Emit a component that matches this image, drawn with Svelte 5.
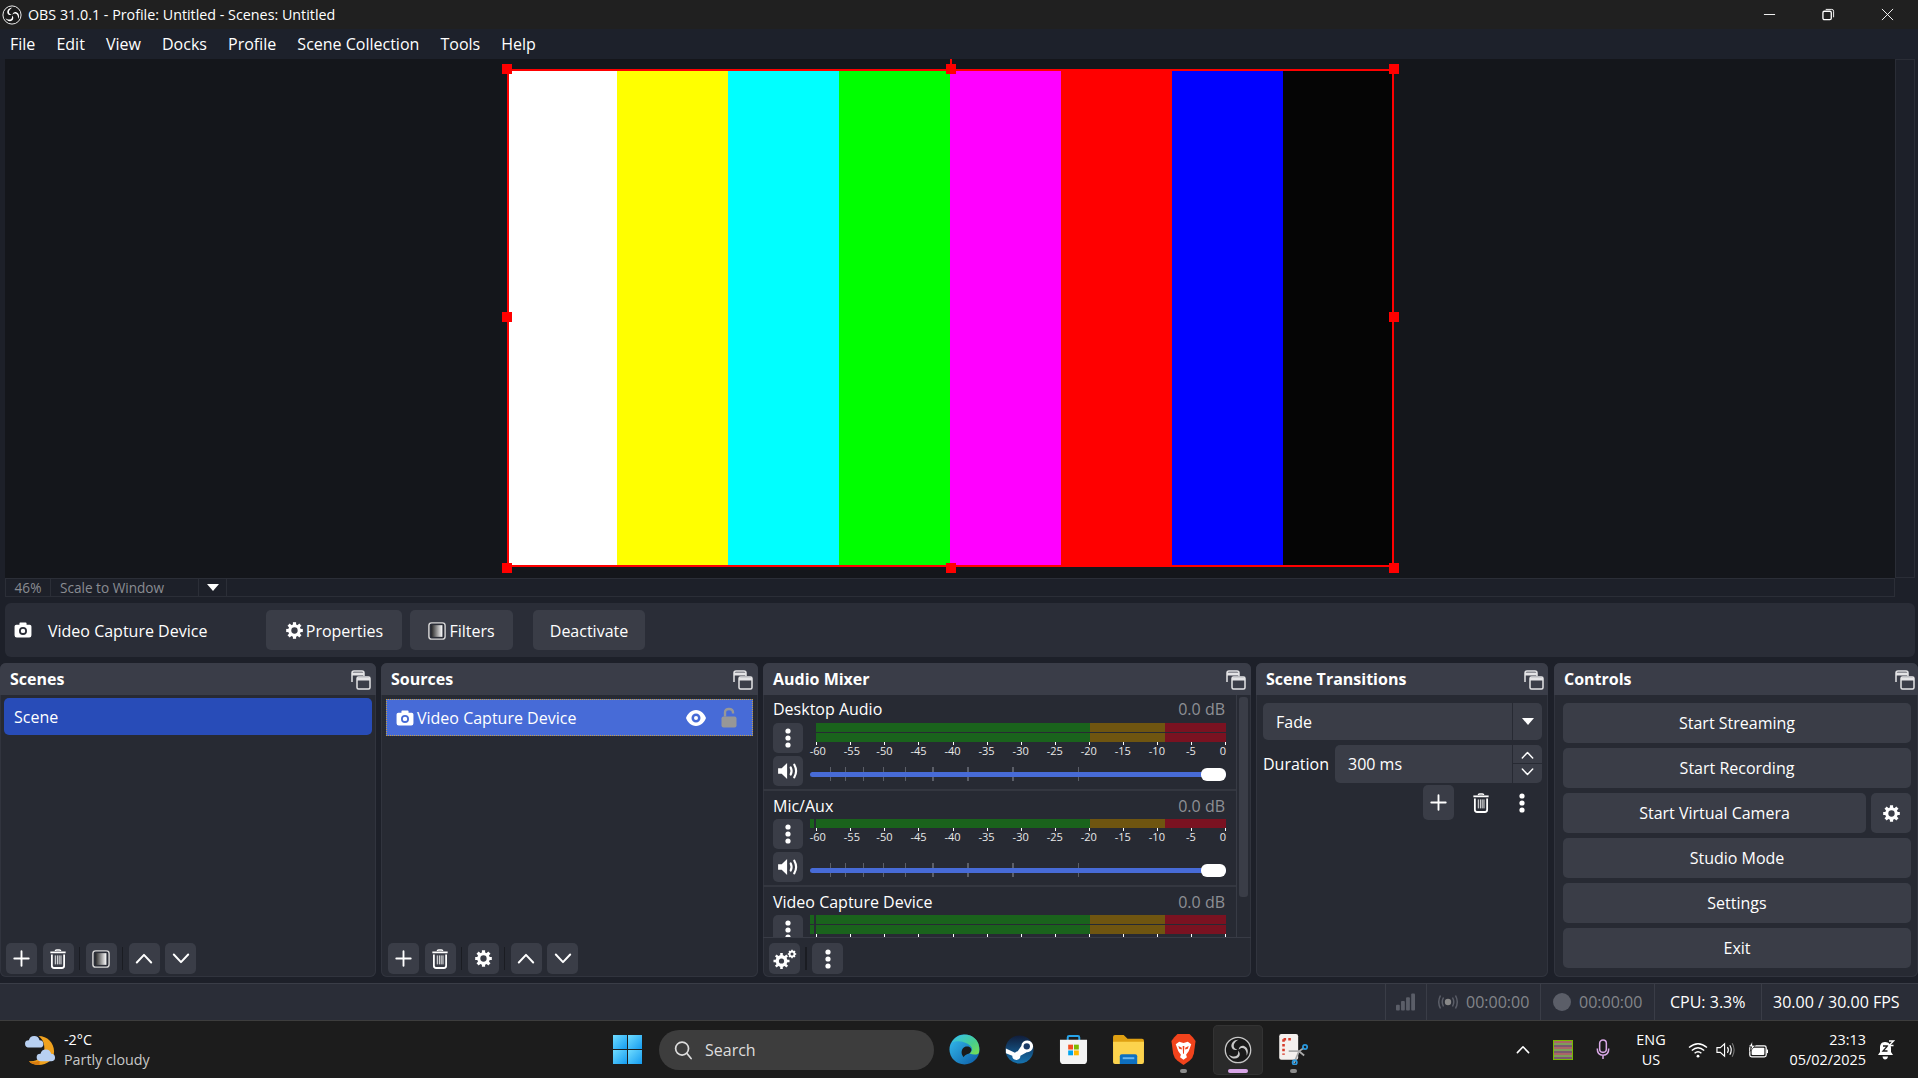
<script>
  const menus = ['File','Edit','View','Docks','Profile','Scene Collection','Tools','Help'];
  const bars = ['#fff','#ff0','#0ff','#0f0','#f0f','#f00','#00f','#050505'];
  const handles = ['tl','tm','tr','ml','mr','bl','bm','br'];
  const dbs = [-60,-55,-50,-45,-40,-35,-30,-25,-20,-15,-10,-5,0];
  const sliderTicks = [[20,1],[35,1],[53,1],[73,1],[95,1],[122,2],[157,2],[202,2],[268,1]];
  const controls = ['Start Streaming','Start Recording'];
  const controls2 = ['Studio Mode','Settings','Exit'];
  const teeth = [0,45,90,135];
  const blades = [0,120,240];
</script>

{#snippet gear(cls)}
  <svg class={cls} viewBox="0 0 24 24" fill="none" stroke="currentColor">
    <circle cx="12" cy="12" r="6" stroke-width="4"/>
    {#each teeth as t}
      <path d="M12 1.5V22.5" stroke-width="4" transform="rotate({t} 12 12)"/>
    {/each}
    <circle cx="12" cy="12" r="4" fill="var(--hole)" stroke="none"/>
  </svg>
{/snippet}
{#snippet plus(cls)}
  <svg class={cls} viewBox="0 0 20 20" stroke="currentColor" stroke-width="2.2" stroke-linecap="round"><path d="M10 1.5V18.5M1.5 10H18.5"/></svg>
{/snippet}
{#snippet trash(cls)}
  <svg class={cls} viewBox="0 0 20 22" fill="none" stroke="currentColor">
    <path d="M1.5 3.6H18.5" stroke-width="2"/><path d="M7 2.2Q7 1 8.5 1H11.5Q13 1 13 2.2" stroke-width="1.5"/>
    <path d="M3.2 6V18.5Q3.2 21 5.7 21H14.3Q16.8 21 16.8 18.5V6" stroke-width="2"/>
    <path d="M7 7V17M9.3 7V17M11.3 7V17M13.3 7V17" stroke-width="1"/>
  </svg>
{/snippet}
{#snippet filterIcon(cls)}
  <svg class={cls} viewBox="0 0 20 20">
    <defs><linearGradient id="fg"><stop offset="0" stop-color="#2a2a2a"/><stop offset="1" stop-color="#fff"/></linearGradient></defs>
    <rect x="1" y="1" width="18" height="18" rx="3" fill="#2c2f38" stroke="#d6d6d6" stroke-width="1.6"/>
    <rect x="4" y="3.5" width="12" height="13" fill="url(#fg)"/>
  </svg>
{/snippet}
{#snippet up(cls)}
  <svg class={cls} viewBox="0 0 20 12" fill="none" stroke="currentColor" stroke-width="2.2" stroke-linecap="round" stroke-linejoin="round"><path d="M2 10.5L10 2L18 10.5"/></svg>
{/snippet}
{#snippet down(cls)}
  <svg class={cls} viewBox="0 0 20 12" fill="none" stroke="currentColor" stroke-width="2.2" stroke-linecap="round" stroke-linejoin="round"><path d="M2 1.5L10 10L18 1.5"/></svg>
{/snippet}
{#snippet dots(cls)}
  <svg class={cls} viewBox="0 0 6 20" fill="currentColor"><circle cx="3" cy="3" r="2.6"/><circle cx="3" cy="10" r="2.6"/><circle cx="3" cy="17" r="2.6"/></svg>
{/snippet}
{#snippet camera(cls)}
  <svg class={cls} viewBox="0 0 20 18">
    <path fill="currentColor" fill-rule="evenodd" d="M6 1.5Q6 .5 7 .5H13Q14 .5 14 1.5V3H17.5Q19.5 3 19.5 5V15Q19.5 17.5 17 17.5H3Q.5 17.5 .5 15V5Q.5 3 2.5 3H6ZM10 5.5A4.5 4.5 0 1 0 10 14.5A4.5 4.5 0 1 0 10 5.5ZM10 7.5A2.5 2.5 0 1 1 10 12.5A2.5 2.5 0 1 1 10 7.5Z"/>
  </svg>
{/snippet}
{#snippet speaker(cls)}
  <svg class={cls} viewBox="0 0 24 20" fill="none" stroke="currentColor">
    <path fill="currentColor" stroke="none" d="M1 7H5L11 1V19L5 13H1Z"/>
    <path d="M15 6Q17 10 15 14" stroke-width="2.4" stroke-linecap="round"/><path d="M19 3Q23 10 19 17" stroke-width="2.4" stroke-linecap="round"/>
  </svg>
{/snippet}
{#snippet floatIcon()}
  <svg class="float" viewBox="0 0 20 20" fill="none" stroke="#e4e4e6" stroke-width="1.5">
    <path d="M1 12V3Q1 1 3 1H11Q13 1 13 3V6" /><path d="M1 4H13" stroke-width="3"/>
    <rect x="6" y="7" width="13" height="12" rx="1.5" fill="#3a3d48"/><path d="M6 9H19" stroke-width="3"/>
  </svg>
{/snippet}
{#snippet obsLogo(cls)}
  <svg class={cls} viewBox="0 0 24 24">
    <circle cx="12" cy="12" r="10.9" fill="#1a1a1a" stroke="currentColor" stroke-width="1.1"/>
    {#each blades as b}
      <path fill="currentColor" transform="rotate({b} 12 12)" d="M12.5 3.2C8.5 3 5.9 6 6.4 9.2C6.8 11.4 9.3 12.7 11.5 11.7C9.4 11.1 7.9 9.5 8.4 7.4C8.9 5.6 10.8 4 12.5 3.2Z"/>
    {/each}
  </svg>
{/snippet}

{#snippet dockHead(title)}
  <div class="dock-head"><span>{title}</span>{@render floatIcon()}</div>
{/snippet}

{#snippet channel(name, stereo, stub, labels)}
  <div class="channel">
    <div class="ch-label"><span>{name}</span><span class="db">0.0 dB</span></div>
    <div class="ch-body">
      <div class="ch-btns">
        <div class="btn sq">{@render dots('i-dots')}</div>
        <div class="btn sq">{@render speaker('i-spk')}</div>
      </div>
      <div class="ch-right">
        <div class="meter-block">
          <div class="meter-rows">
            {#each stereo ? [0,1] : [0] as _}
              <div class="meter-row">
                <i class="stub" class:on={stub}></i>
                <i class="g"></i><i class="y"></i><i class="r"></i>
              </div>
            {/each}
          </div>
          <div class="scale">
            {#each dbs as d, i}
              <i class="mk" style="left:{6.3 + i * 34.06}px"></i>
              {#if labels}
                <span class="lb" style="left:{6.3 + i * 34.06 + (d === 0 ? -2 : i < 2 ? 1.5 : 0)}px">{d}</span>
              {/if}
            {/each}
          </div>
        </div>
        <div class="slider">
          {#each sliderTicks as t}
            <i class="st" style="left:{t[0]}px;width:{t[1]}px"></i>
          {/each}
          <div class="track"></div>
          <div class="knob"></div>
        </div>
      </div>
    </div>
  </div>
{/snippet}

<div class="app">
  <header class="title">
    {@render obsLogo('i-logo')}
    <span>OBS 31.0.1 - Profile: Untitled - Scenes: Untitled</span>
    <div class="winbtns">
      <svg viewBox="0 0 14 14" class="wb"><path d="M1 7H13" stroke="#fff"/></svg>
      <svg viewBox="0 0 14 14" class="wb" fill="none" stroke="#fff"><rect x="1" y="3.5" width="9" height="9" rx="1.5" stroke-width="1.4"/><path d="M4 1.5H10.5Q12.5 1.5 12.5 3.5V10"/></svg>
      <svg viewBox="0 0 14 14" class="wb" stroke="#fff"><path d="M1 1L13 13M13 1L1 13"/></svg>
    </div>
  </header>
  <nav class="menu">
    {#each menus as m}<span>{m}</span>{/each}
  </nav>

  <div class="view">
    <div class="preview">
      <div class="source">
        <div class="bars">{#each bars as b}<i class="bar" style="background:{b}"></i>{/each}</div>
        <div class="frame"></div>
        <div class="nub"></div>
        {#each handles as h}<i class="h {h}"></i>{/each}
      </div>
    </div>
    <div class="vscroll"></div>
  </div>
  <div class="scalebar">
    <span class="pct">46%</span>
    <span class="mode">Scale to Window</span>
    <span class="arrow"><i class="tri"></i></span>
  </div>

  <section class="context">
    {@render camera('i-cam ctx-cam')}
    <span class="ctx-name">Video Capture Device</span>
    <div class="btn ctx-btn props">{@render gear('i-gear')}Properties</div>
    <div class="btn ctx-btn filt">{@render filterIcon('i-filter')}Filters</div>
    <div class="btn ctx-btn deact">Deactivate</div>
  </section>

  <section class="docks">
    <div class="dock d-scenes">
      {@render dockHead('Scenes')}
      <div class="list"><div class="scene-item">Scene</div></div>
      <div class="tools">
        <div class="btn tb">{@render plus('i-plus')}</div>
        <div class="btn tb">{@render trash('i-trash')}</div>
        <i class="sep"></i>
        <div class="btn tb">{@render filterIcon('i-filter')}</div>
        <i class="sep"></i>
        <div class="btn tb">{@render up('i-chev')}</div>
        <div class="btn tb">{@render down('i-chev')}</div>
      </div>
    </div>

    <div class="dock d-sources">
      {@render dockHead('Sources')}
      <div class="list">
        <div class="source-item">
          {@render camera('i-cam')}
          <span class="si-name">Video Capture Device</span>
          <svg class="i-eye" viewBox="0 0 20 16"><path fill="#fff" fill-rule="evenodd" d="M10 0C15 0 18.5 4 20 8C18.5 12 15 16 10 16C5 16 1.5 12 0 8C1.5 4 5 0 10 0ZM10 3.5A4.5 4.5 0 1 0 10 12.5A4.5 4.5 0 1 0 10 3.5Z"/><circle cx="10" cy="8" r="2" fill="#fff"/></svg>
          <svg class="i-lock" viewBox="0 0 16 20"><path d="M4 9V5Q4 1.5 8 1.5Q12 1.5 12 5V6" fill="none" stroke="#979797" stroke-width="2.4"/><rect x="0.5" y="9" width="15" height="11" rx="2" fill="#979797"/></svg>
        </div>
      </div>
      <div class="tools">
        <div class="btn tb">{@render plus('i-plus')}</div>
        <div class="btn tb">{@render trash('i-trash')}</div>
        <i class="sep"></i>
        <div class="btn tb">{@render gear('i-gear sm')}</div>
        <i class="sep"></i>
        <div class="btn tb">{@render up('i-chev')}</div>
        <div class="btn tb">{@render down('i-chev')}</div>
      </div>
    </div>

    <div class="dock d-mixer">
      {@render dockHead('Audio Mixer')}
      <div class="mixer">
        <div class="channels">
          {@render channel('Desktop Audio', true, false, true)}
          {@render channel('Mic/Aux', false, true, true)}
          {@render channel('Video Capture Device', true, true, false)}
        </div>
        <div class="mscroll"><i></i></div>
      </div>
      <div class="tools mix-tools">
        <div class="btn tb">
          <svg class="i-gears" viewBox="0 0 24 20" fill="none" stroke="currentColor">
            <circle cx="8.5" cy="12" r="4.5" stroke-width="3"/>
            {#each teeth as t}<path d="M8.5 4V20" stroke-width="2.6" transform="rotate({t} 8.5 12)"/>{/each}
            <circle cx="8.5" cy="12" r="2.6" fill="#3a3d47" stroke="none"/>
            <circle cx="19" cy="5" r="2.5" stroke-width="1.8"/>
            {#each teeth as t}<path d="M19 .8V9.2" stroke-width="1.5" transform="rotate({t} 19 5)"/>{/each}
            <circle cx="19" cy="5" r="1.5" fill="#3a3d47" stroke="none"/>
          </svg>
        </div>
        <i class="sep"></i>
        <div class="btn tb">{@render dots('i-dots')}</div>
      </div>
    </div>

    <div class="dock d-trans">
      {@render dockHead('Scene Transitions')}
      <div class="trans">
        <div class="field combo"><span>Fade</span><b class="fbtn"><i class="tri"></i></b></div>
        <div class="dur">
          <span>Duration</span>
          <div class="field spin"><span>300 ms</span>
            <b class="spins">
              <em>{@render up('i-spin')}</em>
              <em>{@render down('i-spin')}</em>
            </b>
          </div>
        </div>
        <div class="trans-tools">
          <div class="btn tplus">{@render plus('i-plus')}</div>
          <div class="tghost">{@render trash('i-trash')}</div>
          <div class="tghost">{@render dots('i-dots')}</div>
        </div>
      </div>
    </div>

    <div class="dock d-ctrl">
      {@render dockHead('Controls')}
      <div class="ctrl">
        {#each controls as c}<div class="btn cbtn">{c}</div>{/each}
        <div class="cam-row">
          <div class="btn cbtn grow">Start Virtual Camera</div>
          <div class="btn cbtn gearb">{@render gear('i-gear')}</div>
        </div>
        {#each controls2 as c}<div class="btn cbtn">{c}</div>{/each}
      </div>
    </div>
  </section>

  <footer class="status">
    <div class="cell c-sig">
      <svg viewBox="0 0 20 18" class="i-sig" fill="#5b5e68"><rect x="0" y="12" width="4" height="6" rx="1"/><rect x="5.3" y="8" width="4" height="10" rx="1"/><rect x="10.6" y="4" width="4" height="14" rx="1"/><rect x="16" y="0" width="4" height="18" rx="1"/></svg>
    </div>
    <div class="cell c-stream">
      <svg viewBox="0 0 20 16" class="i-live" fill="none" stroke="#5b5e68" stroke-width="1.5"><circle cx="10" cy="8" r="3.2" fill="#888" stroke="none"/><path d="M5.5 3.5Q3 8 5.5 12.5M14.5 3.5Q17 8 14.5 12.5M2.5 1.5Q-1 8 2.5 14.5M17.5 1.5Q21 8 17.5 14.5"/></svg>
      <span class="dim">00:00:00</span>
    </div>
    <div class="cell c-rec"><i class="recdot"></i><span class="dim">00:00:00</span></div>
    <div class="cell c-cpu">CPU: 3.3%</div>
    <div class="cell c-fps">30.00 / 30.00 FPS</div>
  </footer>

  <footer class="taskbar">
    <div class="tb-left">
      <svg class="i-weather" viewBox="0 0 32 34">
        <path fill="#f0a21e" d="M14 3C23 3 30 10 30 19C30 27 23 33 14 33C10 33 6.5 31.5 4 29C13 30 20 24 20 16C20 10 18 6 14 3Z"/>
        <path fill="#d97c10" d="M4 29C8 30 12 30 15 28L15 33C10 33 6.5 31.5 4 29Z"/>
        <path fill="#b8d0f2" d="M5 15Q0 15 0 11Q0 7.5 4 7.5Q5 3 9.5 3Q14 3 15 7.5Q19 7.5 19 11.5Q19 15 15 15Z"/>
        <path fill="#b8d0f2" d="M17 29Q12 29 12 25Q12 21.5 16 21.5Q17 17 21.5 17Q26 17 27 21.5Q31 21.5 31 25.5Q31 29 27 29Z"/>
      </svg>
      <div class="wtext"><span class="w1">-2°C</span><span class="w2">Partly cloudy</span></div>
    </div>
    <svg class="i-win" viewBox="0 0 29 29">
      <defs><linearGradient id="wg" x1="0" y1="0" x2="1" y2="1"><stop offset="0" stop-color="#6fdcff"/><stop offset="1" stop-color="#149bf0"/></linearGradient></defs>
      <rect width="14" height="14" fill="url(#wg)"/><rect x="15" width="14" height="14" fill="url(#wg)"/><rect y="15" width="14" height="14" fill="url(#wg)"/><rect x="15" y="15" width="14" height="14" fill="url(#wg)"/>
    </svg>
    <div class="search">
      <svg class="i-search" viewBox="0 0 20 20" fill="none" stroke="#ddd" stroke-width="1.8"><circle cx="8.5" cy="8.5" r="6.8"/><path d="M13.5 13.5L18 19" stroke-linecap="round"/></svg>
      <span>Search</span>
    </div>
    <div class="apps">
      <div class="app-i">
        <svg class="ic" viewBox="0 0 32 32">
          <defs>
            <linearGradient id="eg" x1="0" y1="0" x2="1" y2="1"><stop offset="0" stop-color="#35c1f1"/><stop offset="1" stop-color="#0c59a4"/></linearGradient>
            <linearGradient id="eg2" x1="0" y1="0" x2="1" y2="1"><stop offset="0" stop-color="#35c1f1"/><stop offset=".6" stop-color="#49cf8b"/><stop offset="1" stop-color="#7be04f"/></linearGradient>
          </defs>
          <circle cx="16" cy="16" r="15.5" fill="url(#eg)"/>
          <path fill="url(#eg2)" d="M3 9C7 1 17 -1 24 2.5C30 6 32 12 31 19C31 21 26 22 21 20C24 18 25 15 22 12C17 8 9 6 3 9Z"/>
          <path fill="#1a1a1a" d="M13 19C13 15 16 12 20 13C23 14 24 17 22 19C20 21 16 21 15 24C14 22 13 21 13 19Z"/>
        </svg>
      </div>
      <div class="app-i">
        <svg class="ic steam" viewBox="0 0 32 32">
          <defs><linearGradient id="sg" x1="0" y1="0" x2="0" y2="1"><stop offset="0" stop-color="#111d3a"/><stop offset="1" stop-color="#1673b0"/></linearGradient></defs>
          <circle cx="16" cy="16" r="15.5" fill="url(#sg)"/>
          <path fill="#fff" d="M1 15L11 19.5A5 5 0 0 1 14 18L18 12A6.5 6.5 0 1 1 24 19L17 23A4.5 4.5 0 0 1 8 23L1 20Z"/>
          <circle cx="24" cy="12.5" r="3.5" fill="#1a3a66"/>
        </svg>
      </div>
      <div class="app-i">
        <svg class="ic store" viewBox="0 0 30 30">
          <path d="M9 6V2.5Q9 1 10.5 1H19.5Q21 1 21 2.5V6" fill="none" stroke="#27a4ea" stroke-width="2"/>
          <path fill="#f4f4f4" d="M1 5H29V26Q29 30 25 30H5Q1 30 1 26Z"/>
          <rect x="9.5" y="10" width="5" height="5" fill="#f25022"/><rect x="15.5" y="10" width="5" height="5" fill="#7fba00"/><rect x="9.5" y="16" width="5" height="5" fill="#00a4ef"/><rect x="15.5" y="16" width="5" height="5" fill="#ffb900"/>
        </svg>
      </div>
      <div class="app-i">
        <svg class="ic folder" viewBox="0 0 32 30">
          <path fill="#dfa012" d="M0 2Q0 0 2 0H11L15 4H30Q32 4 32 6V12H0Z"/>
          <path fill="#fcd34d" d="M0 7H32V28Q32 30 30 30H2Q0 30 0 28Z"/>
          <path fill="#0e70c0" d="M7 22Q7 20 9 20H23Q25 20 25 22V30H7Z"/>
          <rect x="10" y="23" width="12" height="2" fill="#6ab6ee"/>
        </svg>
      </div>
      <div class="app-i">
        <svg class="ic brave" viewBox="0 0 28 36">
          <path fill="#f1431c" d="M7 0H21L25 4L28 8L26 23Q25 28 21 31L14 36L7 31Q3 28 2 23L0 8L3 4Z"/>
          <path fill="#fff" d="M5 12L9 9L14 10.5L19 9L23 12L20 20L17 24L18 27L14 30L10 27L11 24L8 20Z"/>
          <path fill="#f1431c" d="M8 14L12 16L12 18L9 17ZM20 14L16 16L16 18L19 17ZM13 14H15L14.5 23H13.5Z"/>
        </svg>
        <i class="ind"></i>
      </div>
      <div class="app-i active">
        {@render obsLogo('ic obs-big')}
        <i class="ind big"></i>
      </div>
      <div class="app-i">
        <svg class="ic snip" viewBox="0 0 34 36">
          <rect x="1" y="0" width="22" height="30" rx="2.5" fill="#f4f0ee"/>
          <path d="M6 6H16M6 6V24" stroke="#d73b2a" stroke-width="3" stroke-dasharray="3 2.5"/>
          <path d="M12 20H24L30 16M24 20L30 25M24 20L18 34" stroke="#aaa" stroke-width="2" fill="none"/>
          <circle cx="31" cy="15" r="2.5" fill="none" stroke="#2a9ae0" stroke-width="2"/><circle cx="19" cy="33" r="2.5" fill="none" stroke="#2a9ae0" stroke-width="2"/>
        </svg>
        <i class="ind"></i>
      </div>
    </div>
    <div class="tray">
      <div class="t-chev">{@render up('i-tchev')}</div>
      <div class="t-color"><i class="pal"></i></div>
      <div class="t-mic">
        <svg class="i-mic" viewBox="0 0 14 22" fill="none" stroke="#d8a8e6" stroke-width="1.6"><rect x="3.5" y="1" width="7" height="13" rx="3.5"/><path d="M1 10Q1 17 7 17Q13 17 13 10M7 17V21"/></svg>
      </div>
      <div class="t-eng"><span>ENG</span><span>US</span></div>
      <div class="t-wifi">
        <svg class="i-wifi" viewBox="0 0 20 16" fill="none" stroke="#fff" stroke-width="1.4"><path d="M1 5.5Q10 -2 19 5.5M3.8 8.5Q10 3 16.2 8.5M6.6 11.3Q10 8 13.4 11.3"/><circle cx="10" cy="14.2" r="1.4" fill="#fff" stroke="none"/></svg>
      </div>
      <div class="t-spk">
        <svg class="i-tspk" viewBox="0 0 21 16" fill="none" stroke="#fff" stroke-width="1.2"><path d="M1 5.5H4.5L9 1.5V14.5L4.5 10.5H1Z"/><path d="M12 5Q14 8 12 11M14.5 3Q17.5 8 14.5 13"/><path d="M17 1Q21 8 17 15" stroke="#777"/></svg>
      </div>
      <div class="t-batt">
        <svg class="i-batt" viewBox="0 0 22 18"><path d="M2 5H18Q20 5 20 7V15Q20 17 18 17H4Q2 17 2 15Z" fill="none" stroke="#fff" stroke-width="1.4"/><rect x="4" y="7" width="14" height="8" rx="1" fill="#fff"/><rect x="20.5" y="9" width="1.5" height="4" fill="#fff"/><path d="M5 0L1 6H4L2.5 11L8 4.5H5Z" fill="#fff" stroke="#1c1c1c" stroke-width=".8"/></svg>
      </div>
      <div class="t-time"><span>23:13</span><span>05/02/2025</span></div>
      <div class="t-bell">
        <svg class="i-bell" viewBox="0 0 18 20"><path fill="#fff" d="M8 2C12 2 14 5 14 8V12L16 15H1L3 12V8C3 5 4 2 8 2Z"/><path fill="#fff" d="M5.5 16.5H11Q10.5 19.5 8 19.5Q6 19.5 5.5 16.5Z"/><path d="M6 6H10.5L6 11H10.5" stroke="#1c1c1c" stroke-width="1.3" fill="none"/><path d="M12 1H16.5L12 5.5H16.5" stroke="#fff" stroke-width="1.3" fill="none"/></svg>
      </div>
    </div>
  </footer>
</div>

<style>
  :global(body) { margin: 0; background: #1d2029; }
  i, em, b { display: block; font-style: normal; font-weight: normal; }
  .app {
    --hole: #3a3d47;
    width: 1918px; height: 1078px; overflow: hidden;
    display: flex; flex-direction: column;
    background: #1d2029; color: #fff;
    font-family: "Open Sans", "Noto Sans", sans-serif; font-size: 16px;
  }
  .title {
    height: 29px; background: #202020; display: flex; align-items: center;
    font-size: 14.3px; padding-left: 2px; box-sizing: border-box; flex: none;
  }
  .i-logo { width: 20px; height: 20px; margin-right: 6px; color: #fff; }
  .winbtns { margin-left: auto; display: flex; }
  .wb { width: 13px; height: 13px; margin-right: 46px; fill: none; }
  .wb:last-child { margin-right: 24px; }
  .menu {
    height: 30px; flex: none; display: flex; align-items: center; gap: 21.1px;
    padding-left: 10px; background: #1d212b; font-size: 16px;
  }
  .view { height: 519px; flex: none; display: flex; padding-left: 5px; }
  .preview { width: 1890px; background: #14161b; padding: 10px 0 0 502px; box-sizing: border-box; }
  .source { position: relative; width: 887px; height: 498px; }
  .bars { display: flex; height: 100%; margin-left: -.5px; }
  .bar { flex: 1; }
  .frame { position: absolute; inset: 0; border: 2px solid #f00; }
  .h { position: absolute; width: 10px; height: 10px; background: #f00; }
  .tl { left: -5px; top: -5px; }
  .tm { left: 439px; top: -5px; }
  .tr { right: -5px; top: -5px; }
  .ml { left: -5px; top: 243px; }
  .mr { right: -5px; top: 243px; }
  .bl { left: -5px; bottom: -6px; }
  .bm { left: 439px; bottom: -6px; }
  .br { right: -5px; bottom: -6px; }
  .nub { position: absolute; left: 443px; top: -10px; width: 2px; height: 8px; background: #f00; }
  .vscroll { width: 20px; background: #1d2029; border: 1px solid #2a2d36; box-sizing: border-box; }
  .scalebar {
    margin-left: 5px; width: 1890px; height: 19px; flex: none; box-sizing: border-box;
    border: 1px solid #2b2e37; display: flex; align-items: center;
    font-size: 13.6px; color: #8a8c92; background: #1d2029;
  }
  .scalebar span { box-sizing: border-box; }
  .pct { width: 45px; text-align: center; border-right: 1px solid #2b2e37; line-height: 17px; }
  .mode { width: 148px; padding-left: 9px; line-height: 17px; border-right: 1px solid #2b2e37; white-space: nowrap; }
  .arrow { width: 28px; height: 17px; border-right: 1px solid #2b2e37; display: flex; align-items: center; justify-content: center; }
  .tri { width: 0; height: 0; border-left: 6px solid transparent; border-right: 6px solid transparent; border-top: 7px solid #fff; }

  .context {
    margin: 6px 3px 6px 5px; height: 54px; flex: none; background: #2a2d37; border-radius: 6px;
    display: flex; align-items: center;
  }
  .ctx-cam { margin-left: 9px; }
  .ctx-name { margin-left: 16px; width: 218px; white-space: nowrap; padding-top: 1px; }
  .btn {
    background: #3a3d47; border-radius: 5px; display: flex; align-items: center; justify-content: center;
    white-space: nowrap; box-sizing: border-box;
  }
  .ctx-btn { height: 40px; padding-top: 1px; }
  .props { width: 136px; gap: 2px; }
  .filt { width: 103px; margin-left: 8px; gap: 3px; }
  .deact { width: 112px; margin-left: 20px; }

  .i-gear { width: 19px; height: 19px; }
  .i-filter { width: 18px; height: 18px; }
  .i-cam { width: 18px; height: 16px; flex: none; color: #fff; }
  .i-plus { width: 17px; height: 17px; }
  .i-trash { width: 18px; height: 20px; }
  .i-chev { width: 18px; height: 11px; }
  .i-dots { width: 6px; height: 20px; color: #fff; }
  .i-spk { width: 22px; height: 18px; }
  .i-gears { width: 24px; height: 20px; }

  .docks { height: 314px; flex: none; display: flex; }
  .dock { background: #272a33; border-radius: 6px; box-sizing: border-box; display: flex; flex-direction: column; box-shadow: inset 0 0 0 1px #31343e; overflow: hidden; }
  .d-scenes { width: 376px; }
  .d-sources { width: 377px; margin-left: 5px; }
  .d-mixer { width: 488px; margin-left: 5px; }
  .d-trans { width: 292px; margin-left: 5px; }
  .d-ctrl { width: 364px; margin-left: 6px; }
  .dock-head {
    height: 32px; flex: none; background: #3a3d48; display: flex; align-items: center; justify-content: space-between;
    padding: 0 5px 0 10px; font-weight: 700; font-size: 16px;
  }
  .d-ctrl .dock-head { padding-right: 3px; }
  .d-trans .dock-head { padding-right: 4px; }
  .float { width: 20px; height: 20px; margin-top: 1px; }
  .list { flex: 1; padding: 3px 4px 0 4px; }
  .scene-item { height: 37px; border-radius: 5px; background: #284cb8; display: flex; align-items: center; padding-left: 10px; }
  .d-sources .list { padding-left: 5px; padding-right: 5px; }
  .source-item {
    height: 37px; margin-top: 1px; box-sizing: border-box; background: #476bd7; border: 1px dotted #c9a040;
    display: flex; align-items: center; padding-left: 9px;
  }
  .si-name { margin-left: 3px; flex: 1; }
  .i-eye { width: 20px; height: 16px; margin-right: 15px; }
  .i-lock { width: 16px; height: 21px; margin-right: 15px; }
  .tools { height: 31px; margin-bottom: 3px; flex: none; display: flex; align-items: center; padding-left: 6px; }
  .d-sources .tools { padding-left: 7px; }
  .tb { width: 31px; height: 31px; margin-right: 5.5px; flex: none; }
  .sep { width: 1px; height: 23px; background: #1a1c22; margin: 0 5.5px 0 0; flex: none; }

  .mixer { height: 243px; flex: none; display: flex; border-bottom: 1px solid #383b45; box-sizing: border-box; }
  .channels { width: 473px; border-right: 1px solid #383b45; overflow: hidden; box-sizing: content-box; }
  .channel { height: 96px; box-sizing: border-box; padding: 3px 0 0 10px; border-bottom: 2px solid #343740; }
  .ch-label { height: 22px; width: 452px; display: flex; justify-content: space-between; align-items: center; box-sizing: border-box; }
  .channel + .channel .ch-label { padding-top: 2px; }
  .db { color: #8e9095; }
  .ch-body { display: flex; margin-top: 3px; }
  .ch-btns { width: 37px; display: flex; flex-direction: column; gap: 3px; flex: none; }
  .sq { width: 30px; height: 30px; }
  .ch-right { width: 416px; }
  .meter-block { position: relative; height: 33px; }
  .meter-rows { display: flex; flex-direction: column; gap: 1px; }
  .meter-row { display: flex; height: 9px; }
  .stub { width: 6px; }
  .stub.on { background: linear-gradient(90deg, #1a631c 4px, transparent 4px); }
  .g { width: 274px; background: #1a631c; }
  .y { width: 75px; background: #6f5510; }
  .r { width: 61px; background: #7a1221; }
  .scale { position: relative; height: 16px; }
  .mk { position: absolute; top: 0; width: 1px; height: 3px; background: #fff; }
  .lb { position: absolute; top: 2px; transform: translateX(-50%); font-size: 11px; line-height: 14px; color: #e8e8e8; }
  .slider { position: relative; height: 24px; margin-top: 6px; }
  .st { position: absolute; top: 5px; height: 14px; background: #5b5e68; }
  .track { position: absolute; left: 0; right: 0; top: 9.5px; height: 5px; border-radius: 3px; background: #476bd7; }
  .knob { position: absolute; right: 0; top: 6px; width: 25px; height: 13px; border-radius: 6px; background: #fff; }
  .mscroll { width: 14px; flex: none; padding: 2px 2px 0 2px; box-sizing: border-box; }
  .mscroll i { width: 9px; height: 200px; border-radius: 3px; background: #3a3d47; }
  .mix-tools { margin-top: 5px; padding-left: 6px; }
  .mix-tools .tb { margin-right: 0; }
  .mix-tools .sep { margin: 0 5px 0 5px; width: 2px; }

  .trans { padding: 8px 6px 0 7px; display: flex; flex-direction: column; }
  .field { background: #3a3d47; border-radius: 5px; display: flex; align-items: center; justify-content: space-between; padding-left: 13px; box-sizing: border-box; }
  .combo { height: 37px; }
  .fbtn { width: 29px; height: 37px; border-left: 1px solid #272a33; display: flex; align-items: center; justify-content: center; }
  .dur { display: flex; align-items: center; justify-content: space-between; margin-top: 5px; }
  .spin { width: 207px; height: 38px; }
  .spins { width: 29px; height: 38px; border-left: 1px solid #272a33; }
  .spins em { height: 18.5px; display: flex; align-items: center; justify-content: center; box-sizing: border-box; }
  .spins em:first-child { border-bottom: 1px solid #272a33; padding-top: 2px; }
  .spins em:last-child { padding-bottom: 2px; }
  .i-spin { width: 13px; height: 8px; }
  .trans-tools { display: flex; align-items: center; margin-top: 2px; padding-left: 160px; }
  .tplus { width: 32px; height: 35px; }
  .tghost { width: 42px; height: 35px; display: flex; align-items: center; justify-content: center; margin-left: 7px; }
  .tghost:last-child { margin-left: 0.5px; }

  .ctrl { padding: 8px 7px 0 9px; display: flex; flex-direction: column; gap: 5px; }
  .cbtn { height: 40px; }
  .cam-row { display: flex; gap: 5px; }
  .grow { flex: 1; }
  .gearb { width: 40px; }

  .status {
    margin-top: 6px; height: 37px; flex: none; box-sizing: border-box; background: #2a2d37;
    border-top: 1px solid #3a3d47; display: flex; justify-content: flex-end; align-items: stretch; font-size: 16px;
  }
  .cell { display: flex; align-items: center; border-left: 1px solid #3a3d47; box-sizing: border-box; white-space: nowrap; }
  .c-sig { width: 41px; justify-content: center; padding-right: 2px; }
  .i-sig { width: 19px; height: 18px; }
  .c-stream { width: 114px; padding-left: 11px; gap: 8px; }
  .i-live { width: 20px; height: 16px; flex: none; }
  .dim { color: #83858a; }
  .c-rec { width: 114px; padding-left: 12px; gap: 8px; }
  .recdot { width: 18px; height: 18px; border-radius: 50%; background: #5b5e68; flex: none; }
  .c-cpu { width: 107px; padding-left: 15px; }
  .c-fps { width: 157px; padding-left: 11px; }

  .taskbar {
    height: 58px; flex: none; box-sizing: border-box; background: #1c1c1c; border-top: 1px solid #3d3d3d;
    display: flex; align-items: center;
  }
  .tb-left { width: 613px; flex: none; display: flex; align-items: center; padding-left: 25px; box-sizing: border-box; }
  .i-weather { width: 31px; height: 33px; flex: none; }
  .wtext { margin-left: 8px; display: flex; flex-direction: column; font-size: 14.3px; line-height: 20px; }
  .w2 { color: #c8c8c8; }
  .i-win { width: 29px; height: 29px; flex: none; }
  .search {
    margin-left: 17px; width: 275px; height: 40px; flex: none; box-sizing: border-box; border-radius: 20px;
    background: #3d3d3d; display: flex; align-items: center; padding-left: 15px; gap: 12px; font-size: 16px; color: #ddd;
  }
  .i-search { width: 19px; height: 20px; }
  .apps { display: flex; margin-left: 3px; height: 50px; }
  .app-i { width: 54.8px; height: 50px; position: relative; display: flex; align-items: center; justify-content: center; border-radius: 5px; box-sizing: border-box; flex: none; }
  .app-i.active { background: #2a2a2a; box-shadow: inset 0 0 0 1px #333; width: 50px; margin: 0 2.4px; }
  .ic { width: 31px; height: 31px; }
  .ic.steam { width: 29px; height: 29px; }
  .ic.store { width: 29px; height: 29px; }
  .ic.folder { width: 31px; height: 29px; }
  .ic.brave { width: 25px; height: 31px; }
  .ic.snip { width: 30px; height: 31px; }
  .ic.obs-big { width: 28px; height: 28px; color: #c8c8c8; }
  .ind { position: absolute; left: 24px; bottom: 2px; width: 7px; height: 4px; border-radius: 2px; background: #8c8c8c; }
  .ind.big { left: 15px; width: 20px; background: #d9a6e8; }
  .tray { margin-left: auto; display: flex; align-items: center; width: 418px; font-size: 14.4px; }
  .tray > div { display: flex; align-items: center; justify-content: center; flex: none; }
  .t-chev { width: 46px; color: #fff; }
  .i-tchev { width: 14px; height: 9px; }
  .t-color { width: 34px; }
  .pal { width: 20px; height: 20px; box-sizing: border-box; border: 1px solid #7ab800; background: repeating-linear-gradient(0deg, #7a5a70 0 2px, #7f9d5a 2px 4px, #a66 4px 6px), #555; }
  .t-mic { width: 46px; }
  .i-mic { width: 14px; height: 21px; }
  .t-eng { width: 50px; flex-direction: column; line-height: 20px; }
  .t-wifi { width: 28px; margin-left: 8px; }
  .i-wifi { width: 20px; height: 16px; }
  .t-spk { width: 28px; }
  .i-tspk { width: 20px; height: 16px; }
  .t-batt { width: 28px; margin-left: 4px; }
  .i-batt { width: 20px; height: 17px; }
  .t-time { width: 94px; flex-direction: column; align-items: flex-end !important; line-height: 20px; }
  .t-bell { width: 28px; margin-left: 6px; }
  .i-bell { width: 18px; height: 20px; }
</style>
